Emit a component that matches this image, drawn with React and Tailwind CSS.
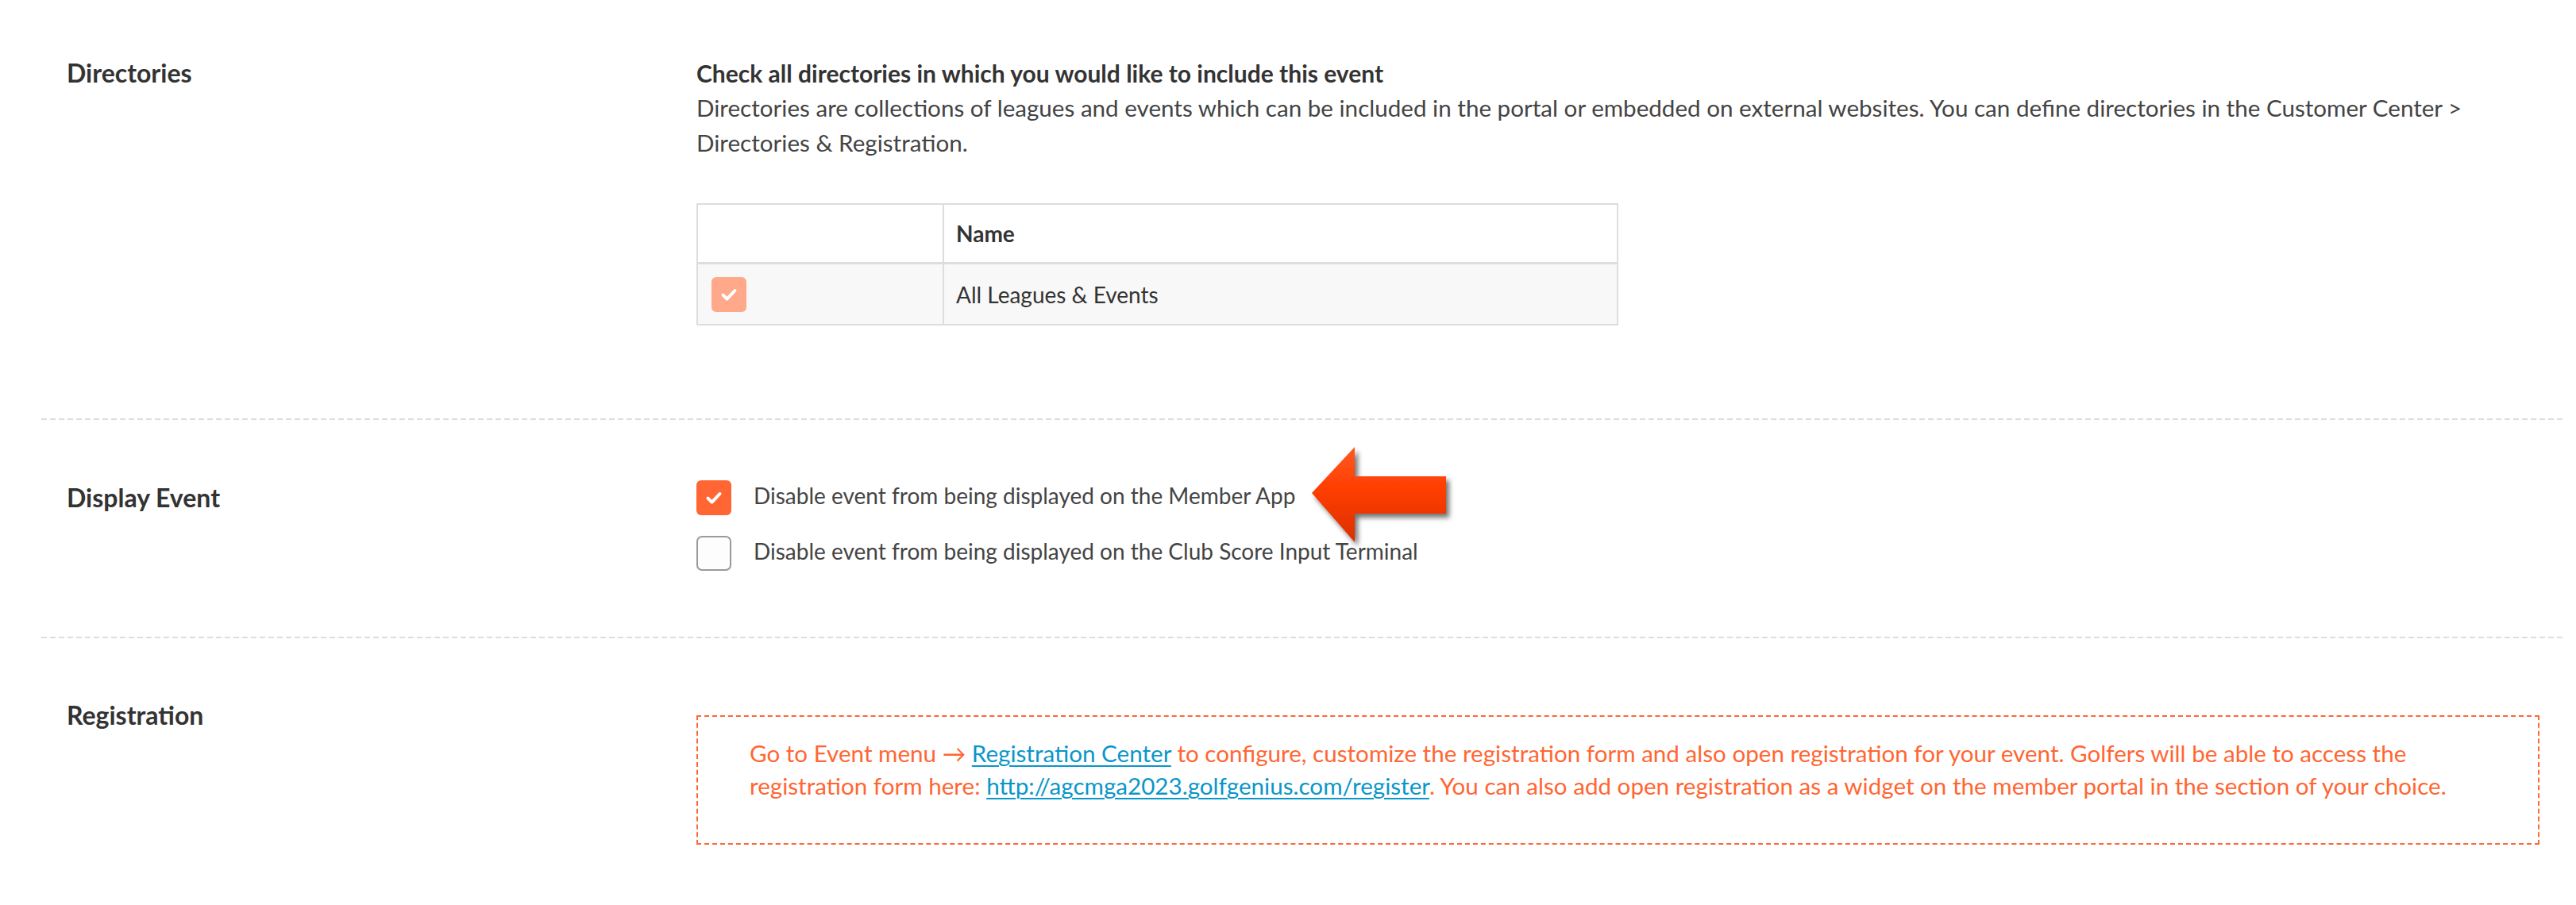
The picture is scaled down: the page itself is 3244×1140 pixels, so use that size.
import React from 'react';

const font = { fontFamily: 'Lato, "Open Sans", sans-serif' };

const Separator = () => (
  <div className="h-[2px] w-full bg-[repeating-linear-gradient(to_right,#dddddd_0,#dddddd_7px,transparent_7px,transparent_11px)]"></div>
);

const CheckIcon = ({ className }) => (
  <svg viewBox="0 0 24 24" className={className} fill="none" stroke="white" strokeWidth="3.2" strokeLinecap="round" strokeLinejoin="round">
    <path d="M6 12.5l4 4 8-8.5" />
  </svg>
);

const Checkbox = ({ checked, faded }) => {
  if (checked) {
    return (
      <span className={`flex h-[44px] w-[44px] flex-shrink-0 items-center justify-center rounded-[6px] ${faded ? 'bg-[#ffa88a]' : 'bg-[#ff6633]'}`}>
        <CheckIcon className="h-[30px] w-[30px]" />
      </span>
    );
  }
  return <span className="block h-[44px] w-[44px] flex-shrink-0 rounded-[7px] border-2 border-[#9a9a9a] bg-[#fdfdfd]"></span>;
};

const Arrow = () => (
  <svg width="200" height="145" viewBox="0 0 200 145" className="absolute left-[1588px] top-[26px]">
    <defs>
      <linearGradient id="arrowFill" x1="0" y1="0" x2="0" y2="1">
        <stop offset="0" stopColor="#ff5a22" />
        <stop offset="0.45" stopColor="#ff3d00" />
        <stop offset="1" stopColor="#d93000" />
      </linearGradient>
      <filter id="arrowShadow" x="-20%" y="-20%" width="140%" height="140%">
        <feDropShadow dx="4" dy="5" stdDeviation="3" floodColor="#000" floodOpacity="0.55" />
      </filter>
    </defs>
    <path d="M12 66 L66 8 L66 45 L181 45 L181 92 L66 92 L66 128 Z" fill="url(#arrowFill)" filter="url(#arrowShadow)" />
  </svg>
);

export default function App() {
  return (
    <div className="min-h-screen bg-white pl-[52px] pr-[16px] text-[28px] leading-[44px] text-[#444]" style={font}>
      {/* Directories */}
      <section className="flex pb-[117px] pt-[70px]">
        <div className="w-[825px] flex-shrink-0 pl-[32px] text-[32px] font-bold text-[#333]">Directories</div>
        <div className="flex-1 pr-[30px]">
          <p className="text-[30px] font-bold text-[#333]">Check all directories in which you would like to include this event</p>
          <p className="text-[29.6px]">
            Directories are collections of leagues and events which can be included in the portal or embedded on external websites. You can define directories in the Customer Center &gt; Directories &amp; Registration.
          </p>
          <div className="mt-[54px] w-[1161px] border-2 border-[#dddddd]">
            <div className="flex h-[75px] border-b-[3px] border-[#dddddd]">
              <div className="w-[310px] border-r-2 border-[#dddddd]"></div>
              <div className="flex items-center pl-[15px] font-bold text-[#333]">Name</div>
            </div>
            <div className="flex h-[75px] bg-[#f8f8f8]">
              <div className="flex w-[310px] items-center border-r-2 border-[#dddddd] pl-[17px]">
                <Checkbox checked faded />
              </div>
              <div className="flex items-center pl-[15px] text-[#333]">All Leagues &amp; Events</div>
            </div>
          </div>
        </div>
      </section>

      <Separator />

      {/* Display Event */}
      <section className="relative flex pb-[83px] pt-[76px]">
        <div className="w-[825px] flex-shrink-0 pl-[32px] text-[32px] font-bold text-[#333]">Display Event</div>
        <div className="flex flex-1 flex-col gap-[26px] pr-[30px]">
          <label className="flex h-[44px] items-center gap-[28px]">
            <Checkbox checked />
            <span className="pb-[6px] leading-[38px]">Disable event from being displayed on the Member App</span>
          </label>
          <label className="flex h-[44px] items-center gap-[28px]">
            <Checkbox />
            <span className="pb-[6px] leading-[38px]">Disable event from being displayed on the Club Score Input Terminal</span>
          </label>
        </div>
        <Arrow />
      </section>

      <Separator />

      {/* Registration */}
      <section className="flex pb-[77px] pt-[75px]">
        <div className="w-[825px] flex-shrink-0 pl-[32px] text-[32px] font-bold text-[#333]">Registration</div>
        <div className="flex-1 pr-[30px]">
          <div className="mt-[22px] border-2 border-dashed border-[#ff6633] px-[65px] pb-[52px] pt-[25px] text-[29.6px] leading-[41px] text-[#ff6633]">
            Go to Event menu &#8594;{' '}
            <a href="#" className="text-[#0a96c8] underline decoration-2 underline-offset-4">Registration Center</a>{' '}
            to configure, customize the registration form and also open registration for your event. Golfers will be able to access the registration form here:{' '}
            <a href="#" className="text-[#0a96c8] underline decoration-2 underline-offset-4">http://agcmga2023.golfgenius.com/register</a>. You can also add open registration as a widget on the member portal in the section of your choice.
          </div>
        </div>
      </section>
    </div>
  );
}
